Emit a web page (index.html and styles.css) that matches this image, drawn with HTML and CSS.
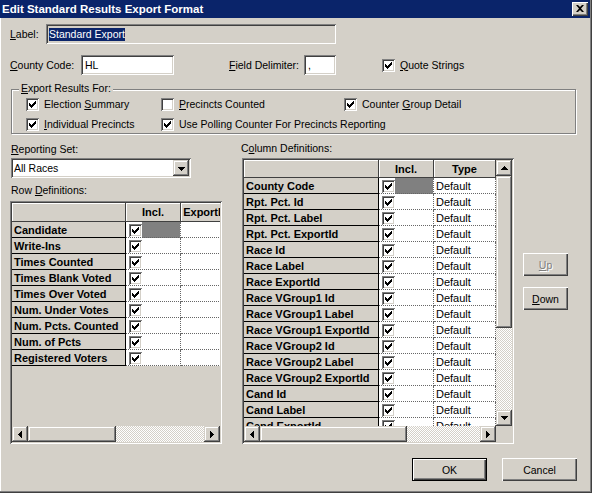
FILE: index.html
```html
<!DOCTYPE html>
<html lang="en">
<head>
    <meta charset="UTF-8">
    <title>Edit Standard Results Export Format</title>
    <link rel="stylesheet" href="styles.css">
</head>
<body>
    <div class="window">
        <div class="titlebar">
            <span class="title">Edit Standard Results Export Format</span>
            <div class="close-btn">
                <svg width="8" height="7" viewBox="0 0 8 7"><path d="M0 0h2l2 2 2-2h2L5 3.5 8 7H6L4 5 2 7H0l3-3.5z"/></svg>
            </div>
        </div>

        <div class="row row-label">
            <span class="caption cap-label"><u>L</u>abel:</span>
            <div class="textbox label-box"><span class="selected">Standard Export</span></div>
        </div>

        <div class="row row-county">
            <span class="caption cap-county"><u>C</u>ounty Code:</span>
            <div class="textbox county-box">HL</div>
            <span class="caption cap-delim"><u>F</u>ield Delimiter:</span>
            <div class="textbox delim-box">,</div>
            <div class="check quote-check">
                <span class="checkbox"><svg viewBox="0 0 13 13" shape-rendering="crispEdges"><path d="M3 4.5L5.5 7L10 2.5V5.5L5.5 10L3 7.5Z"/></svg></span>
                <span><u>Q</u>uote Strings</span>
            </div>
        </div>

        <div class="groupbox">
            <span class="legend"><u>E</u>xport Results For:</span>
            <div class="group-grid">
                <div class="check">
                    <span class="checkbox"><svg viewBox="0 0 13 13" shape-rendering="crispEdges"><path d="M3 4.5L5.5 7L10 2.5V5.5L5.5 10L3 7.5Z"/></svg></span>
                    <span>Election <u>S</u>ummary</span>
                </div>
                <div class="check">
                    <span class="checkbox"></span>
                    <span><u>P</u>recincts Counted</span>
                </div>
                <div class="check">
                    <span class="checkbox"><svg viewBox="0 0 13 13" shape-rendering="crispEdges"><path d="M3 4.5L5.5 7L10 2.5V5.5L5.5 10L3 7.5Z"/></svg></span>
                    <span>Counter <u>G</u>roup Detail</span>
                </div>
                <div class="check">
                    <span class="checkbox"><svg viewBox="0 0 13 13" shape-rendering="crispEdges"><path d="M3 4.5L5.5 7L10 2.5V5.5L5.5 10L3 7.5Z"/></svg></span>
                    <span><u>I</u>ndividual Precincts</span>
                </div>
                <div class="check span-2">
                    <span class="checkbox"><svg viewBox="0 0 13 13" shape-rendering="crispEdges"><path d="M3 4.5L5.5 7L10 2.5V5.5L5.5 10L3 7.5Z"/></svg></span>
                    <span>Use Polling Counter For Precincts Reporting</span>
                </div>
            </div>
        </div>

        <div class="main">
            <!-- left side: reporting set + row definitions -->
            <div class="left-col">
                <div class="caption cap-line cap-reporting"><u>R</u>eporting Set:</div>
                <div class="dropdown">
                    <span class="dropdown-text">All Races</span>
                    <span class="sb-btn dd-btn"><svg width="7" height="4" viewBox="0 0 7 4"><path d="M0 0h7v1H6v1H5v1H4v1H3V3H2V2H1V1H0z"/></svg></span>
                </div>
                <div class="caption cap-line cap-rowdefs">Row <u>D</u>efinitions:</div>

                <div class="grid grid-rows">
                    <div class="gview">
                        <div class="grow ghead ghead-l">
                            <div class="gc c-name-l hd"></div>
                            <div class="gc c-incl hd">Incl.</div>
                            <div class="gc c-export hd">ExportId</div>
                        </div>
                        <div class="grow">
                            <div class="gc c-name-l rh">Candidate</div>
                            <div class="gc c-incl cell current"><span class="checkbox"><svg viewBox="0 0 13 13" shape-rendering="crispEdges"><path d="M3 4.5L5.5 7L10 2.5V5.5L5.5 10L3 7.5Z"/></svg></span></div>
                            <div class="gc c-export cell"></div>
                        </div>
                        <div class="grow">
                            <div class="gc c-name-l rh">Write-Ins</div>
                            <div class="gc c-incl cell"><span class="checkbox"><svg viewBox="0 0 13 13" shape-rendering="crispEdges"><path d="M3 4.5L5.5 7L10 2.5V5.5L5.5 10L3 7.5Z"/></svg></span></div>
                            <div class="gc c-export cell"></div>
                        </div>
                        <div class="grow">
                            <div class="gc c-name-l rh">Times Counted</div>
                            <div class="gc c-incl cell"><span class="checkbox"><svg viewBox="0 0 13 13" shape-rendering="crispEdges"><path d="M3 4.5L5.5 7L10 2.5V5.5L5.5 10L3 7.5Z"/></svg></span></div>
                            <div class="gc c-export cell"></div>
                        </div>
                        <div class="grow">
                            <div class="gc c-name-l rh">Times Blank Voted</div>
                            <div class="gc c-incl cell"><span class="checkbox"><svg viewBox="0 0 13 13" shape-rendering="crispEdges"><path d="M3 4.5L5.5 7L10 2.5V5.5L5.5 10L3 7.5Z"/></svg></span></div>
                            <div class="gc c-export cell"></div>
                        </div>
                        <div class="grow">
                            <div class="gc c-name-l rh">Times Over Voted</div>
                            <div class="gc c-incl cell"><span class="checkbox"><svg viewBox="0 0 13 13" shape-rendering="crispEdges"><path d="M3 4.5L5.5 7L10 2.5V5.5L5.5 10L3 7.5Z"/></svg></span></div>
                            <div class="gc c-export cell"></div>
                        </div>
                        <div class="grow">
                            <div class="gc c-name-l rh">Num. Under Votes</div>
                            <div class="gc c-incl cell"><span class="checkbox"><svg viewBox="0 0 13 13" shape-rendering="crispEdges"><path d="M3 4.5L5.5 7L10 2.5V5.5L5.5 10L3 7.5Z"/></svg></span></div>
                            <div class="gc c-export cell"></div>
                        </div>
                        <div class="grow">
                            <div class="gc c-name-l rh">Num. Pcts. Counted</div>
                            <div class="gc c-incl cell"><span class="checkbox"><svg viewBox="0 0 13 13" shape-rendering="crispEdges"><path d="M3 4.5L5.5 7L10 2.5V5.5L5.5 10L3 7.5Z"/></svg></span></div>
                            <div class="gc c-export cell"></div>
                        </div>
                        <div class="grow">
                            <div class="gc c-name-l rh">Num. of Pcts</div>
                            <div class="gc c-incl cell"><span class="checkbox"><svg viewBox="0 0 13 13" shape-rendering="crispEdges"><path d="M3 4.5L5.5 7L10 2.5V5.5L5.5 10L3 7.5Z"/></svg></span></div>
                            <div class="gc c-export cell"></div>
                        </div>
                        <div class="grow">
                            <div class="gc c-name-l rh">Registered Voters</div>
                            <div class="gc c-incl cell"><span class="checkbox"><svg viewBox="0 0 13 13" shape-rendering="crispEdges"><path d="M3 4.5L5.5 7L10 2.5V5.5L5.5 10L3 7.5Z"/></svg></span></div>
                            <div class="gc c-export cell"></div>
                        </div>
                    </div>
                    <div class="hscroll">
                        <span class="sb-btn"><svg width="4" height="7" viewBox="0 0 4 7"><path d="M4 0v7H3V6H2V5H1V4H0V3h1V2h1V1h1V0z"/></svg></span>
                        <span class="sb-thumb thumb-l"></span>
                        <span class="sb-track"></span>
                        <span class="sb-btn"><svg width="4" height="7" viewBox="0 0 4 7"><path d="M0 0v7h1V6h1V5h1V4h1V3H3V2H2V1H1V0z"/></svg></span>
                    </div>
                </div>
            </div>

            <!-- right side: column definitions -->
            <div class="right-col">
                <div class="caption cap-line cap-coldefs">C<u>o</u>lumn Definitions:</div>
                <div class="grid grid-cols">
                    <div class="gview">
                        <div class="grow ghead ghead-r">
                            <div class="gc c-name-r hd"></div>
                            <div class="gc c-incl hd">Incl.</div>
                            <div class="gc c-type hd">Type</div>
                        </div>
                        <div class="grow">
                            <div class="gc c-name-r rh">County Code</div>
                            <div class="gc c-incl cell current"><span class="checkbox"><svg viewBox="0 0 13 13" shape-rendering="crispEdges"><path d="M3 4.5L5.5 7L10 2.5V5.5L5.5 10L3 7.5Z"/></svg></span></div>
                            <div class="gc c-type cell">Default</div>
                        </div>
                        <div class="grow">
                            <div class="gc c-name-r rh">Rpt. Pct. Id</div>
                            <div class="gc c-incl cell"><span class="checkbox"><svg viewBox="0 0 13 13" shape-rendering="crispEdges"><path d="M3 4.5L5.5 7L10 2.5V5.5L5.5 10L3 7.5Z"/></svg></span></div>
                            <div class="gc c-type cell">Default</div>
                        </div>
                        <div class="grow">
                            <div class="gc c-name-r rh">Rpt. Pct. Label</div>
                            <div class="gc c-incl cell"><span class="checkbox"><svg viewBox="0 0 13 13" shape-rendering="crispEdges"><path d="M3 4.5L5.5 7L10 2.5V5.5L5.5 10L3 7.5Z"/></svg></span></div>
                            <div class="gc c-type cell">Default</div>
                        </div>
                        <div class="grow">
                            <div class="gc c-name-r rh">Rpt. Pct. ExportId</div>
                            <div class="gc c-incl cell"><span class="checkbox"><svg viewBox="0 0 13 13" shape-rendering="crispEdges"><path d="M3 4.5L5.5 7L10 2.5V5.5L5.5 10L3 7.5Z"/></svg></span></div>
                            <div class="gc c-type cell">Default</div>
                        </div>
                        <div class="grow">
                            <div class="gc c-name-r rh">Race Id</div>
                            <div class="gc c-incl cell"><span class="checkbox"><svg viewBox="0 0 13 13" shape-rendering="crispEdges"><path d="M3 4.5L5.5 7L10 2.5V5.5L5.5 10L3 7.5Z"/></svg></span></div>
                            <div class="gc c-type cell">Default</div>
                        </div>
                        <div class="grow">
                            <div class="gc c-name-r rh">Race Label</div>
                            <div class="gc c-incl cell"><span class="checkbox"><svg viewBox="0 0 13 13" shape-rendering="crispEdges"><path d="M3 4.5L5.5 7L10 2.5V5.5L5.5 10L3 7.5Z"/></svg></span></div>
                            <div class="gc c-type cell">Default</div>
                        </div>
                        <div class="grow">
                            <div class="gc c-name-r rh">Race ExportId</div>
                            <div class="gc c-incl cell"><span class="checkbox"><svg viewBox="0 0 13 13" shape-rendering="crispEdges"><path d="M3 4.5L5.5 7L10 2.5V5.5L5.5 10L3 7.5Z"/></svg></span></div>
                            <div class="gc c-type cell">Default</div>
                        </div>
                        <div class="grow">
                            <div class="gc c-name-r rh">Race VGroup1 Id</div>
                            <div class="gc c-incl cell"><span class="checkbox"><svg viewBox="0 0 13 13" shape-rendering="crispEdges"><path d="M3 4.5L5.5 7L10 2.5V5.5L5.5 10L3 7.5Z"/></svg></span></div>
                            <div class="gc c-type cell">Default</div>
                        </div>
                        <div class="grow">
                            <div class="gc c-name-r rh">Race VGroup1 Label</div>
                            <div class="gc c-incl cell"><span class="checkbox"><svg viewBox="0 0 13 13" shape-rendering="crispEdges"><path d="M3 4.5L5.5 7L10 2.5V5.5L5.5 10L3 7.5Z"/></svg></span></div>
                            <div class="gc c-type cell">Default</div>
                        </div>
                        <div class="grow">
                            <div class="gc c-name-r rh">Race VGroup1 ExportId</div>
                            <div class="gc c-incl cell"><span class="checkbox"><svg viewBox="0 0 13 13" shape-rendering="crispEdges"><path d="M3 4.5L5.5 7L10 2.5V5.5L5.5 10L3 7.5Z"/></svg></span></div>
                            <div class="gc c-type cell">Default</div>
                        </div>
                        <div class="grow">
                            <div class="gc c-name-r rh">Race VGroup2 Id</div>
                            <div class="gc c-incl cell"><span class="checkbox"><svg viewBox="0 0 13 13" shape-rendering="crispEdges"><path d="M3 4.5L5.5 7L10 2.5V5.5L5.5 10L3 7.5Z"/></svg></span></div>
                            <div class="gc c-type cell">Default</div>
                        </div>
                        <div class="grow">
                            <div class="gc c-name-r rh">Race VGroup2 Label</div>
                            <div class="gc c-incl cell"><span class="checkbox"><svg viewBox="0 0 13 13" shape-rendering="crispEdges"><path d="M3 4.5L5.5 7L10 2.5V5.5L5.5 10L3 7.5Z"/></svg></span></div>
                            <div class="gc c-type cell">Default</div>
                        </div>
                        <div class="grow">
                            <div class="gc c-name-r rh">Race VGroup2 ExportId</div>
                            <div class="gc c-incl cell"><span class="checkbox"><svg viewBox="0 0 13 13" shape-rendering="crispEdges"><path d="M3 4.5L5.5 7L10 2.5V5.5L5.5 10L3 7.5Z"/></svg></span></div>
                            <div class="gc c-type cell">Default</div>
                        </div>
                        <div class="grow">
                            <div class="gc c-name-r rh">Cand Id</div>
                            <div class="gc c-incl cell"><span class="checkbox"><svg viewBox="0 0 13 13" shape-rendering="crispEdges"><path d="M3 4.5L5.5 7L10 2.5V5.5L5.5 10L3 7.5Z"/></svg></span></div>
                            <div class="gc c-type cell">Default</div>
                        </div>
                        <div class="grow">
                            <div class="gc c-name-r rh">Cand Label</div>
                            <div class="gc c-incl cell"><span class="checkbox"><svg viewBox="0 0 13 13" shape-rendering="crispEdges"><path d="M3 4.5L5.5 7L10 2.5V5.5L5.5 10L3 7.5Z"/></svg></span></div>
                            <div class="gc c-type cell">Default</div>
                        </div>
                        <div class="grow">
                            <div class="gc c-name-r rh">Cand ExportId</div>
                            <div class="gc c-incl cell"><span class="checkbox"><svg viewBox="0 0 13 13" shape-rendering="crispEdges"><path d="M3 4.5L5.5 7L10 2.5V5.5L5.5 10L3 7.5Z"/></svg></span></div>
                            <div class="gc c-type cell">Default</div>
                        </div>
                    </div>
                    <div class="vscroll">
                        <span class="sb-btn"><svg width="7" height="4" viewBox="0 0 7 4"><path d="M3 0h1v1h1v1h1v1h1v1H0V3h1V2h1V1h1z"/></svg></span>
                        <span class="sb-thumb thumb-v"></span>
                        <span class="sb-track"></span>
                        <span class="sb-btn"><svg width="7" height="4" viewBox="0 0 7 4"><path d="M0 0h7v1H6v1H5v1H4v1H3V3H2V2H1V1H0z"/></svg></span>
                    </div>
                    <div class="hscroll">
                        <span class="sb-btn"><svg width="4" height="7" viewBox="0 0 4 7"><path d="M4 0v7H3V6H2V5H1V4H0V3h1V2h1V1h1V0z"/></svg></span>
                        <span class="sb-thumb thumb-r"></span>
                        <span class="sb-track"></span>
                        <span class="sb-btn"><svg width="4" height="7" viewBox="0 0 4 7"><path d="M0 0v7h1V6h1V5h1V4h1V3H3V2H2V1H1V0z"/></svg></span>
                    </div>
                    <div class="corner"></div>
                </div>
            </div>

            <div class="side-buttons">
                <div class="btn btn-side disabled"><u>U</u>p</div>
                <div class="btn btn-side"><u>D</u>own</div>
            </div>
        </div>

        <div class="footer">
            <div class="btn btn-default">OK</div>
            <div class="btn">Cancel</div>
        </div>
    </div>
</body>
</html>
```

FILE: styles.css
```css
* {
    margin: 0;
    padding: 0;
    box-sizing: border-box;
}

body {
    width: 592px;
    height: 493px;
    overflow: hidden;
    background: #d4d0c8;
    font-family: 'Liberation Sans', Arial, sans-serif;
    font-size: 10.5px;
    color: #000;
}

u {
    text-decoration-thickness: 1px;
    text-underline-offset: 1px;
}

.window {
    width: 592px;
    height: 493px;
    background: #d4d0c8;
    box-shadow: inset -1px -1px #404040, inset -2px -2px #808080, inset 1px 1px #fff;
    display: flex;
    flex-direction: column;
}

/* title bar */
.titlebar {
    height: 18px;
    margin-right: 2px;
    padding: 0 2px;
    background: #0a246a;
    color: #fff;
    display: flex;
    align-items: center;
    justify-content: space-between;
}

.title {
    font-size: 11.5px;
    font-weight: bold;
}

.close-btn {
    width: 16px;
    height: 14px;
    background: #d4d0c8;
    box-shadow: inset 1px 1px #fff, inset -1px -1px #404040, inset -2px -2px #808080;
    display: flex;
    align-items: center;
    justify-content: center;
    padding-bottom: 1px;
}

/* form rows */
.row {
    display: flex;
    align-items: center;
    height: 20px;
    padding-left: 10px;
}

.row-label {
    margin-top: 6px;
}

.row-county {
    margin-top: 11px;
}

.caption {
    line-height: 13px;
    white-space: nowrap;
}

.cap-label { width: 36px; }
.cap-county { width: 71px; }
.cap-delim { width: 75px; margin-left: 55px; }

.textbox {
    height: 20px;
    background: #fff;
    box-shadow: inset 1px 1px #808080, inset -1px -1px #fff, inset 2px 2px #404040, inset -2px -2px #d4d0c8;
    display: flex;
    align-items: center;
    padding-left: 4px;
    font-size: 10.5px;
}

.label-box {
    width: 290px;
    background: #d4d0c8;
    padding-left: 3px;
}

.selected {
    background: #0a246a;
    color: #fff;
    line-height: 13px;
}

.county-box { width: 93px; }
.delim-box { width: 32px; }

.quote-check {
    margin-left: 46px;
}

/* checkboxes */
.check {
    display: flex;
    align-items: center;
    gap: 5px;
    white-space: nowrap;
    line-height: 13px;
}

.checkbox {
    display: block;
    width: 13px;
    height: 13px;
    flex: none;
    background: #fff;
    box-shadow: inset 1px 1px #808080, inset -1px -1px #fff, inset 2px 2px #404040, inset -2px -2px #d4d0c8;
}

.checkbox svg {
    display: block;
    width: 13px;
    height: 13px;
}

/* group box */
.groupbox {
    position: relative;
    margin: 14px 0 0 11px;
    width: 565px;
    height: 45px;
    border: 1px solid #808080;
    box-shadow: inset 1px 1px #fff, 1px 1px 0 #fff;
}

.legend {
    position: absolute;
    top: -8px;
    left: 7px;
    padding: 0 2px;
    background: #d4d0c8;
    line-height: 13px;
}

.group-grid {
    display: grid;
    grid-template-columns: 135px 183px auto;
    grid-auto-rows: 13px;
    row-gap: 7px;
    padding: 8px 0 0 14px;
}

.span-2 {
    grid-column: span 2;
}

/* main area */
.main {
    display: flex;
    align-items: flex-start;
    margin-top: 8px;
    padding-left: 10px;
}

.left-col {
    width: 212px;
}

.cap-line {
    height: 13px;
}

.cap-reporting {
    margin-top: 1px;
    padding-left: 1px;
}

.cap-rowdefs {
    margin-top: 6px;
    padding-left: 1px;
}

.cap-coldefs {
    margin-left: -1px;
}

.dropdown {
    margin: 2px 0 0 1px;
    width: 180px;
    height: 20px;
    background: #fff;
    box-shadow: inset 1px 1px #808080, inset -1px -1px #fff, inset 2px 2px #404040, inset -2px -2px #d4d0c8;
    display: flex;
    align-items: center;
    justify-content: space-between;
    padding: 2px;
}

.dropdown-text {
    padding-left: 1px;
}

.right-col {
    width: 272px;
    margin-left: 20px;
}

.side-buttons {
    width: 45px;
    margin-left: 9px;
    padding-top: 111px;
    display: flex;
    flex-direction: column;
    gap: 11px;
}

/* grids */
.grid {
    background: #d4d0c8;
    padding: 2px;
    box-shadow: inset 1px 1px #808080, inset -1px -1px #fff, inset 2px 2px #404040, inset -2px -2px #d4d0c8;
    display: grid;
}

.grid-rows {
    margin-top: 4px;
    width: 212px;
    height: 243px;
    grid-template-rows: 1fr 16px;
}

.grid-cols {
    margin-top: 3px;
    width: 272px;
    height: 286px;
    grid-template-columns: 1fr 16px;
    grid-template-rows: 1fr 16px;
}

.gview {
    overflow: hidden;
    min-width: 0;
    min-height: 0;
}

.grow {
    display: flex;
    height: 16px;
}

.ghead-l { height: 19px; }
.ghead-r { height: 18px; }

.gc {
    flex: none;
    height: 100%;
    display: flex;
    align-items: center;
    overflow: hidden;
    white-space: nowrap;
    font-size: 11px;
}

.c-name-l { width: 114px; }
.c-name-r { width: 135px; }
.c-incl { width: 55px; }
.c-export { width: 50px; }
.c-type { width: 62px; }

.hd {
    justify-content: center;
    font-weight: bold;
    background: #d4d0c8;
    border-right: 1px solid #404040;
    border-bottom: 1px solid #404040;
    box-shadow: inset 1px 1px #fff;
}

.rh {
    font-weight: bold;
    padding-left: 2px;
    background: #d4d0c8;
    border-right: 1px solid #000;
    border-bottom: 1px solid #000;
}

.cell {
    background: #fff;
    padding-left: 2px;
    border-right: 1px dotted #666;
    border-bottom: 1px dotted #666;
}

.c-incl.cell {
    align-items: flex-start;
    padding: 2px 0 0 3px;
}

.cell.current {
    background: linear-gradient(to right, #fff 16px, #808080 16px);
}

/* scrollbars */
.hscroll {
    display: flex;
}

.vscroll {
    display: flex;
    flex-direction: column;
}

.sb-btn {
    width: 16px;
    height: 16px;
    flex: none;
    background: #d4d0c8;
    box-shadow: inset -1px -1px #404040, inset 1px 1px #d4d0c8, inset -2px -2px #808080, inset 2px 2px #fff;
    display: flex;
    align-items: center;
    justify-content: center;
}

.sb-btn svg {
    display: block;
}

.sb-thumb {
    flex: none;
    background: #d4d0c8;
    box-shadow: inset -1px -1px #404040, inset 1px 1px #d4d0c8, inset -2px -2px #808080, inset 2px 2px #fff;
}

.thumb-l { width: 88px; }
.thumb-r { width: 147px; }
.thumb-v { height: 152px; }

.sb-track {
    flex: 1;
    background: repeating-conic-gradient(#fff 0 25%, #d4d0c8 0 50%) 0 0 / 2px 2px;
}

.corner {
    background: #d4d0c8;
}

.dd-btn {
    padding-top: 1px;
}

/* buttons */
.btn {
    width: 75px;
    height: 23px;
    background: #d4d0c8;
    box-shadow: inset 1px 1px #fff, inset -1px -1px #404040, inset -2px -2px #808080;
    display: flex;
    align-items: center;
    justify-content: center;
    font-size: 10.5px;
}

.btn-side {
    width: 45px;
}

.btn-default {
    border: 1px solid #000;
}

.disabled {
    color: #808080;
    text-shadow: 1px 1px #fff;
}

.footer {
    display: flex;
    justify-content: flex-end;
    gap: 15px;
    margin-top: 14px;
    padding-right: 15px;
}
```
